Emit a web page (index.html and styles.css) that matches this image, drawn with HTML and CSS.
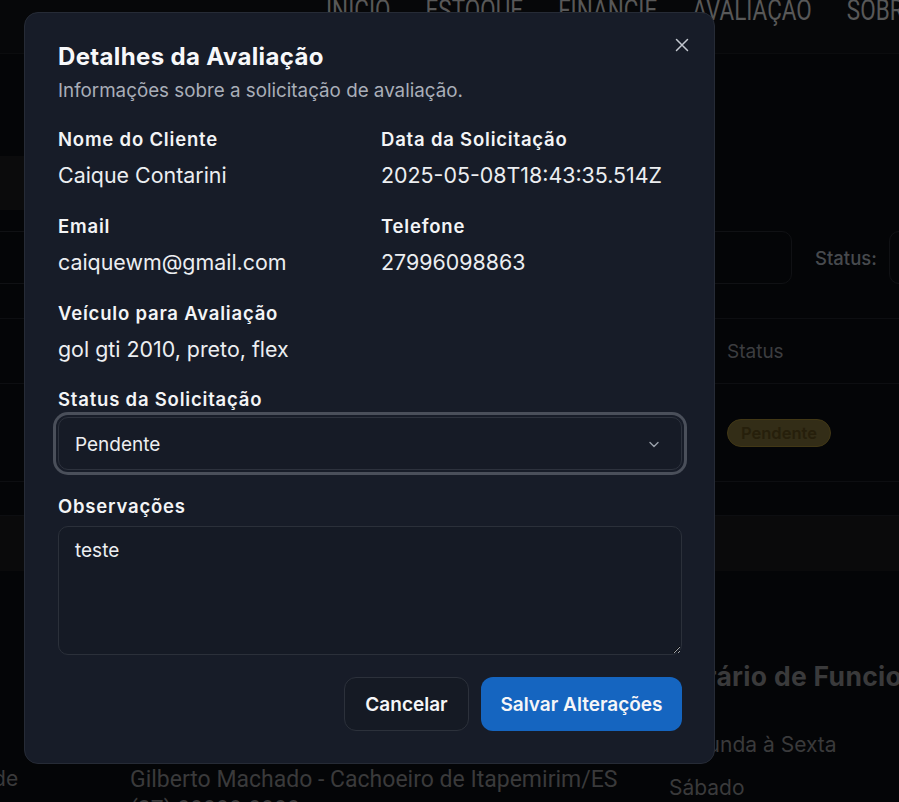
FILE: index.html
```html
<!DOCTYPE html>
<html lang="pt-BR">
<head>
<meta charset="utf-8">
<title>Detalhes da Avaliação</title>
<link rel="stylesheet" href="styles.css">
</head>
<body>
<div class="page">
  <header class="topbar">
    <nav class="nav">
      <span>INÍCIO</span>
      <span>ESTOQUE</span>
      <span>FINANCIE</span>
      <span>AVALIAÇÃO</span>
      <span>SOBRE</span>
    </nav>
  </header>
  <section class="content">
    <div class="title-band"></div>
    <div class="filters">
      <div class="search"></div>
      <span class="filter-label">Status:</span>
      <div class="filter-select"></div>
    </div>
    <div class="table">
      <div class="thead"><span class="col-status">Status</span></div>
      <div class="trow"><span class="col-status"><span class="badge">Pendente</span></span></div>
      <div class="tfoot"></div>
      <div class="tband"></div>
    </div>
  </section>
  <footer class="footer">
    <div class="fcol fcol-a"><span>Cidade</span></div>
    <div class="fcol fcol-b">
      <span>Gilberto Machado - Cachoeiro de Itapemirim/ES</span>
      <span>(27) 99999-9999</span>
    </div>
    <div class="fcol fcol-c">
      <h3>Horário de Funcionamento</h3>
      <span>Segunda à Sexta</span>
      <span>Sábado</span>
    </div>
  </footer>
</div>

<div class="overlay">
  <div class="modal" role="dialog">
    <button class="close" aria-label="Fechar">
      <svg width="14" height="14" viewBox="0 0 14 14"><path d="M1.5 1.5L12.5 12.5M12.5 1.5L1.5 12.5" stroke="#c3c7cf" stroke-width="1.5" stroke-linecap="round" fill="none"/></svg>
    </button>
    <h2 class="title">Detalhes da Avaliação</h2>
    <p class="subtitle">Informações sobre a solicitação de avaliação.</p>

    <div class="grid">
      <div class="field">
        <div class="label">Nome do Cliente</div>
        <div class="value">Caique Contarini</div>
      </div>
      <div class="field">
        <div class="label">Data da Solicitação</div>
        <div class="value">2025-05-08T18:43:35.514Z</div>
      </div>
      <div class="field">
        <div class="label">Email</div>
        <div class="value">caiquewm@gmail.com</div>
      </div>
      <div class="field">
        <div class="label">Telefone</div>
        <div class="value">27996098863</div>
      </div>
      <div class="field">
        <div class="label">Veículo para Avaliação</div>
        <div class="value">gol gti 2010, preto, flex</div>
      </div>
    </div>

    <div class="block">
      <div class="label">Status da Solicitação</div>
      <div class="select">
        <span>Pendente</span>
        <svg width="14" height="14" viewBox="0 0 14 14"><path d="M3 5.5L7 9.5L11 5.5" stroke="#9aa0aa" stroke-width="1.4" stroke-linecap="round" stroke-linejoin="round" fill="none"/></svg>
      </div>
    </div>

    <div class="block obs">
      <div class="label">Observações</div>
      <textarea class="textarea">teste</textarea>
    </div>

    <div class="actions">
      <button class="btn btn-outline">Cancelar</button>
      <button class="btn btn-primary">Salvar Alterações</button>
    </div>
  </div>
</div>
</body>
</html>
```

FILE: styles.css
```css
* { box-sizing: border-box; }
html, body { margin: 0; padding: 0; }
body {
  background: #040507;
  font-family: "Inter", "Liberation Sans", sans-serif;
  width: 899px;
  height: 802px;
  overflow: hidden;
  position: relative;
}

/* ---------- background page ---------- */
.page { width: 899px; height: 802px; overflow: hidden; }
.topbar {
  height: 54px;
  background: #060709;
  border-bottom: 1px solid #0b0c0e;
  overflow: hidden;
}
.nav {
  display: flex;
  gap: 35px;
  padding-left: 326px;
  font-family: "Roboto", sans-serif;
  font-weight: 400;
  font-size: 22.5px;
  line-height: 24px;
  height: 24px;
  color: #585858;
  white-space: nowrap;
  transform: scaleY(1.3);
  transform-origin: 0 0;
  margin-top: -6px;
}
.content { padding-top: 102px; }
.title-band { width: 300px; height: 54px; background: #0b0b0c; }
.filters {
  display: flex;
  align-items: center;
  margin-top: 21px;
  height: 53px;
}
.search {
  flex: 0 0 812px;
  margin-left: -20px;
  height: 53px;
  border: 1px solid #101114;
  border-radius: 10px;
}
.filter-label {
  flex: 0 0 auto;
  margin-left: 23px;
  font-size: 18.5px;
  color: #474a4e;
  font-weight: 500;
}
.filter-select {
  flex: 0 0 60px;
  margin-left: 12px;
  height: 53px;
  border: 1px solid #101114;
  border-radius: 10px;
}
.table { margin-top: 34px; }
.thead, .trow, .tfoot {
  border-top: 1px solid #0d0e11;
  display: flex;
  align-items: center;
}
.thead { height: 65px; }
.trow { height: 98px; }
.tfoot { height: 34px; }
.tband { height: 56px; background: #0a0a0b; border-top: 1px solid #0d0e11; }
.col-status {
  margin-left: 727px;
  font-size: 19px;
  color: #3c3d40;
}
.badge {
  display: inline-block;
  padding: 3px 13px;
  border-radius: 14px;
  background: #332d17;
  border: 1px solid #423816;
  color: #261f0b;
  font-weight: 600;
  font-size: 16.5px;
  line-height: 20px;
}
.footer {
  display: flex;
  color: #3a3a3b;
  font-size: 21px;
  height: 230px;
}
.fcol { display: flex; flex-direction: column; flex: 0 0 auto; }
.fcol-a { width: 130px; padding-top: 195px; line-height: 26px; }
.fcol-a span { margin-left: -52px; white-space: nowrap; }
.fcol-b {
  width: 539px;
  padding-top: 194px;
  line-height: 30px;
  font-family: "Roboto", sans-serif;
  font-size: 23px;
  white-space: nowrap;
}
.fcol-c { padding-top: 89px; }
.fcol-c h3 {
  margin: 0 0 40px;
  font-size: 26.5px;
  font-weight: 700;
  letter-spacing: 0.3px;
  line-height: 32px;
  color: #3a3a3b;
  white-space: nowrap;
}
.fcol-c span { line-height: 26px; margin-bottom: 17px; white-space: nowrap; }

/* ---------- modal ---------- */
.overlay {
  position: absolute;
  inset: 0;
}
.modal {
  position: absolute;
  left: 24px;
  top: 12px;
  width: 691px;
  height: 752px;
  background: #171c28;
  border: 1px solid #262b36;
  border-radius: 14px;
  padding: 29px 32px 0 33px;
  color: #f1f2f4;
}
.close {
  position: absolute;
  top: 22px;
  right: 22px;
  width: 20px;
  height: 20px;
  padding: 0;
  border: 0;
  background: transparent;
  display: flex;
  align-items: center;
  justify-content: center;
}
.title {
  margin: 0;
  font-size: 24px;
  line-height: 30px;
  font-weight: 700;
  letter-spacing: 0.35px;
  color: #f7f8fa;
}
.subtitle {
  margin: 7px 0 0;
  font-size: 18.8px;
  line-height: 24px;
  color: #a9aeb8;
}
.grid {
  margin-top: 24px;
  display: grid;
  grid-template-columns: 323px 1fr;
  row-gap: 25px;
}
.label {
  font-size: 18.5px;
  line-height: 24px;
  font-weight: 600;
  letter-spacing: 0.8px;
  color: #f3f4f6;
  white-space: nowrap;
}
.value {
  margin-top: 10px;
  font-size: 21.4px;
  line-height: 28px;
  color: #eceef1;
  white-space: nowrap;
}
.block { margin-top: 24px; }
.select {
  margin-top: 6px;
  height: 53px;
  border: 1px solid #2d323d;
  border-radius: 10px;
  background: #161b26;
  box-shadow: 0 0 0 2px #171c28, 0 0 0 5px #4a4f5a;
  display: flex;
  align-items: center;
  justify-content: space-between;
  padding: 1px 20px 0 16px;
  font-size: 19px;
  color: #eceef1;
}
.obs { margin-top: 24px; }
.textarea {
  display: block;
  margin-top: 8px;
  width: 100%;
  height: 129px;
  background: #151a25;
  border: 1px solid #2b303a;
  border-radius: 10px;
  padding: 11px 16px;
  color: #eceef1;
  font-family: "Inter", sans-serif;
  font-size: 19px;
  line-height: 26px;
  color-scheme: dark;
  resize: vertical;
  outline: none;
}
.actions {
  display: flex;
  justify-content: flex-end;
  gap: 12px;
  margin-top: 22px;
}
.btn {
  height: 54px;
  border-radius: 12px;
  font-family: "Inter", sans-serif;
  font-size: 19px;
  font-weight: 600;
  color: #f5f6f8;
  padding: 0;
}
.btn-outline {
  background: #151a24;
  border: 1px solid #2c313b;
  width: 125px;
}
.btn-primary {
  background: #1565c0;
  border: 0;
  width: 201px;
}
```
